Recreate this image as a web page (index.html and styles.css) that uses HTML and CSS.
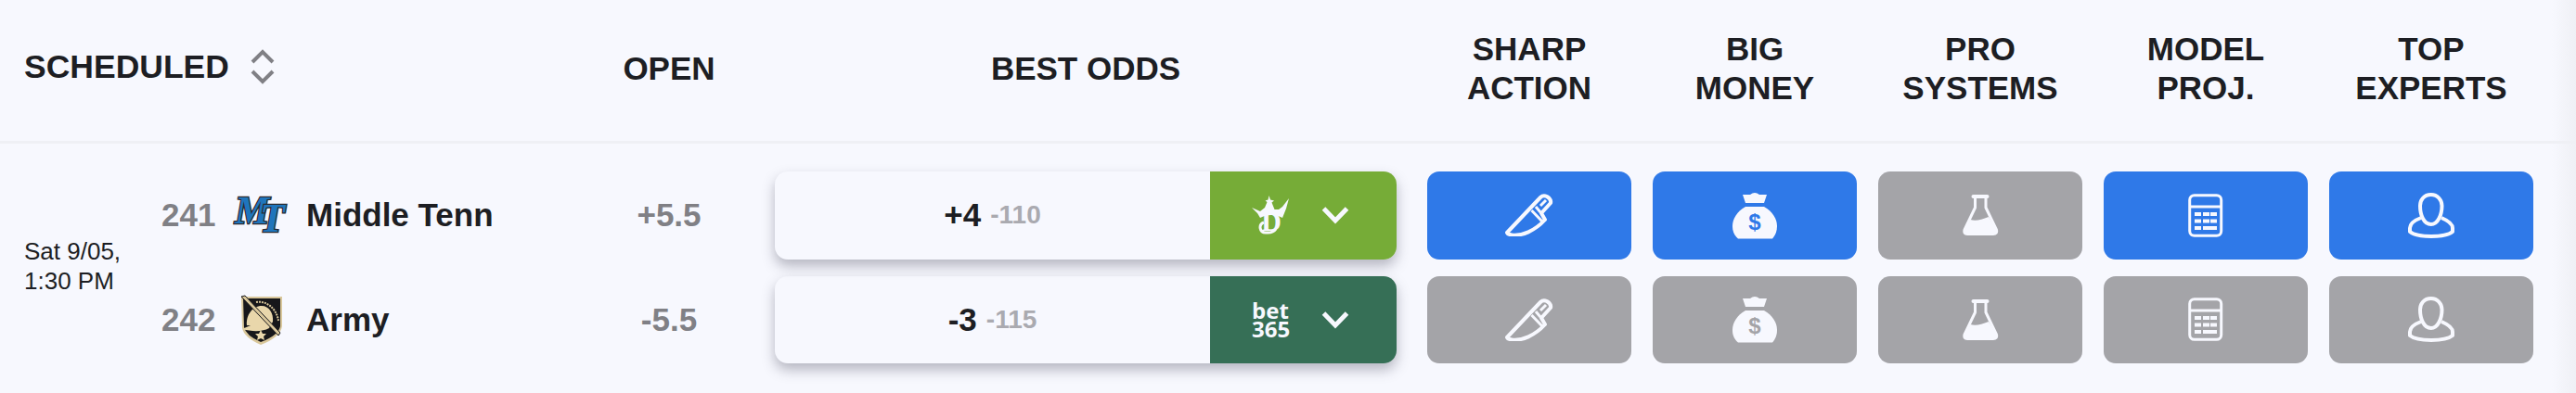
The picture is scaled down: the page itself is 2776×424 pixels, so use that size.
FILE: index.html
```html
<!DOCTYPE html>
<html>
<head>
  <meta charset="UTF-8" />
  <title>Scheduled Games</title>
  <link rel="stylesheet" href="styles.css">
</head>
<body>
  <svg class="defs" width="0" height="0">
    <symbol id="knife" viewBox="0 0 52 46">
      <path class="line" d="M2 42 L38 4 Q41 1 45 3 Q50 6 49 10 L39 21 L43 28 C32 40 18 46 7 44.5 Q3 44 2 42 Z" />
      <path class="line thin" d="M28.5 18 L40 30 M33 14 L38 20" />
      <path class="line thin" d="M38 13 L44 7" />
    </symbol>
    <symbol id="flask" viewBox="0 0 39 44">
      <rect class="solid" x="9.5" y="0" width="19" height="4" rx="2" />
      <path class="line thin" d="M13.5 3 V14 L2 38 Q1 42.5 5 42.5 H33 Q37.5 42.5 36.5 38 L25 14 V3" />
      <path class="solid" d="M8.5 27 C14 29 20 27 28 24 L37 39 Q37 43 33 43 H5 Q1 43 2 38 Z" />
    </symbol>
    <symbol id="calc" viewBox="0 0 38 47">
      <rect class="line thin" x="1.7" y="1.7" width="34" height="43.6" rx="5" />
      <path class="line thin" d="M2 14 H36" />
      <path class="solid" d="M7 20 h7 v4 h-7 z M16 20 h7 v4 h-7 z M24 20 h7 v4 h-7 z M7 27.5 h7 v4 h-7 z M16 27.5 h7 v4 h-7 z M24 27.5 h7 v4 h-7 z M7 35 h7 v4 h-7 z M16 35 h15 v4 h-15 z" />
    </symbol>
    <symbol id="person" viewBox="0 0 50 49">
      <path class="line" d="M24.8 2 C17 2 13 8 13 14 C13 24 17 34 24.8 34 C32 34 36.5 24 36.5 14 C36.5 8 32 2 24.8 2 Z" />
      <path class="line" d="M14 27 C6 30 2 33 2 38 V42 C10 48.5 40 48.5 48 42 V38 C48 33 43 30 36 27" />
    </symbol>
  </svg>

  <div class="board">
    <!-- Header -->
    <div class="head">
      <div class="head-sched">
        <span>SCHEDULED</span>
        <svg class="sort" width="26" height="38" viewBox="0 0 26 38">
          <path d="M2 14 L13 3 L24 14 M2 24 L13 35 L24 24" />
        </svg>
      </div>
      <div class="head-open">OPEN</div>
      <div class="head-odds">BEST ODDS</div>
      <div class="head-signals">
        <div>SHARP<br>ACTION</div>
        <div>BIG<br>MONEY</div>
        <div>PRO<br>SYSTEMS</div>
        <div>MODEL<br>PROJ.</div>
        <div>TOP<br>EXPERTS</div>
      </div>
    </div>

    <!-- Game -->
    <div class="game">
      <div class="game-date">Sat 9/05,<br>1:30 PM</div>
      <div class="lines">

        <div class="line-row">
          <div class="rot">241</div>
          <div class="logo">
            <svg width="60" height="40" viewBox="0 0 60 40">
              <text class="mt" x="3" y="29">M</text>
              <text class="mt mt-t" x="30" y="38">T</text>
            </svg>
          </div>
          <div class="team">Middle Tenn</div>
          <div class="open">+5.5</div>
          <div class="odds">
            <div class="odds-value"><b>+4</b><span>-110</span></div>
            <div class="book book-dk">
              <svg class="book-logo" width="40" height="42" viewBox="0 0 40 42">
                <text class="dk-d" x="21" y="38" text-anchor="middle">D</text>
                <path class="dk-crown" d="M0 13 L9 17 L14 13 L16.5 7 L14.5 5.5 L17.5 4.5 L18.5 0 L20 4.5 L24 5.5 L21.5 7.5 L24.5 15 L29 15 L33 12 L40 3 L37 14 L33 24 C26 20 16 20 9 24 L6 19 Z" />
                <path class="dk-swash" d="M13 29 C7 31 8 40 15 40 C20 40.5 24 39 26 36" />
              </svg>
              <svg class="chev" width="30" height="20" viewBox="0 0 30 20"><path d="M2.5 3 L15 16 L27.5 3" /></svg>
            </div>
          </div>
          <div class="signals">
            <div class="signal on"><svg width="52" height="46"><use href="#knife" /></svg></div>
            <div class="signal on">
              <svg width="48" height="51" viewBox="0 0 48 51">
                <path class="solid" d="M11 3 L19 3 Q24 -1 29 3 L37 3 L34 12 L14 12 Z" />
                <path class="solid" d="M14 16 H34 C43 21 48 29 48 37 C48 43 46 47 43 50.5 H6 C2 47 0 43 0 37 C0 29 5 21 14 16 Z" />
                <text class="cut" x="24" y="41" text-anchor="middle">$</text>
              </svg>
            </div>
            <div class="signal"><svg width="39" height="44"><use href="#flask" /></svg></div>
            <div class="signal on"><svg width="38" height="47"><use href="#calc" /></svg></div>
            <div class="signal on"><svg width="50" height="49"><use href="#person" /></svg></div>
          </div>
        </div>

        <div class="line-row">
          <div class="rot">242</div>
          <div class="logo">
            <svg class="logo-army" width="46" height="54" viewBox="0 0 46 54">
              <path d="M2 2 H46 V34 Q44 46 23 54 Q5 46 3 36 Z" fill="#d9c79b" />
              <path d="M4 4 H44 V34 Q42 44 23 51 Q7 44 5 35 Z" fill="#17171a" />
              <path d="M8 33 C7 22 14 12 24 12 C32 12 37 20 36 29 L32 36 C25 40 14 40 3 37 L12 33 Z" fill="#e9d7ab" />
              <path d="M2 2 L6 1 L44 41 L42 44 Z" fill="#d9c79b" stroke="#17171a" stroke-width="1" />
              <path d="M18 8 C28 6 40 14 42 28" fill="none" stroke="#d9c79b" stroke-width="2" stroke-dasharray="2 1" />
              <path d="M23 38 L25 42 L29 42 L26 45 L27 49 L23 47 L19 49 L20 45 L17 42 L21 42 Z" fill="#e9d7ab" />
            </svg>
          </div>
          <div class="team">Army</div>
          <div class="open">-5.5</div>
          <div class="odds">
            <div class="odds-value"><b>-3</b><span>-115</span></div>
            <div class="book book-365">
              <div class="book-logo bet365">bet<br>365</div>
              <svg class="chev" width="30" height="20" viewBox="0 0 30 20"><path d="M2.5 3 L15 16 L27.5 3" /></svg>
            </div>
          </div>
          <div class="signals">
            <div class="signal"><svg width="52" height="46"><use href="#knife" /></svg></div>
            <div class="signal">
              <svg width="48" height="51" viewBox="0 0 48 51">
                <path class="solid" d="M11 3 L19 3 Q24 -1 29 3 L37 3 L34 12 L14 12 Z" />
                <path class="solid" d="M14 16 H34 C43 21 48 29 48 37 C48 43 46 47 43 50.5 H6 C2 47 0 43 0 37 C0 29 5 21 14 16 Z" />
                <text class="cut" x="24" y="41" text-anchor="middle">$</text>
              </svg>
            </div>
            <div class="signal"><svg width="39" height="44"><use href="#flask" /></svg></div>
            <div class="signal"><svg width="38" height="47"><use href="#calc" /></svg></div>
            <div class="signal"><svg width="50" height="49"><use href="#person" /></svg></div>
          </div>
        </div>

      </div>
    </div>
  </div>
</body>
</html>
```

FILE: styles.css
```css
body {
  margin: 0;
  height: 424px;
  overflow: hidden;
  font-family: "Liberation Sans", Arial, sans-serif;
  color: #1d1e23;
  background: linear-gradient(to left, #eff0f5, #f7f8fe 26px);
}

.defs {
  position: absolute;
}

/* Header */
.head {
  display: flex;
  align-items: center;
  height: 148px;
  padding-bottom: 4px;
  border-bottom: 3px solid #eff0f5;
  font-size: 35px;
  font-weight: bold;
  line-height: 42px;
}

.head-sched {
  display: flex;
  align-items: center;
  gap: 23px;
  width: 594px;
  padding-left: 26px;
  margin-top: -4px;
  font-size: 35.5px;
}

.sort path {
  fill: none;
  stroke: #808085;
  stroke-width: 4;
}

.head-open {
  width: 202px;
  text-align: center;
}

.head-odds {
  width: 670px;
  margin-left: 13px;
  text-align: center;
}

.head-signals {
  display: flex;
  gap: 23px;
  margin-left: 33px;
  text-align: center;
}

.head-signals div {
  width: 220px;
}

/* Game */
.game {
  display: flex;
  padding-top: 30px;
}

.game-date {
  display: flex;
  align-items: center;
  width: 148px;
  padding-left: 26px;
  padding-bottom: 4px;
  box-sizing: border-box;
  font-size: 26px;
  line-height: 32px;
}

.lines {
  display: flex;
  flex-direction: column;
  gap: 18px;
}

.line-row {
  display: flex;
  align-items: center;
  height: 94.5px;
}

.rot {
  width: 76px;
  margin-left: 26px;
  font-size: 35px;
  font-weight: bold;
  color: #808085;
}

.logo {
  display: flex;
  justify-content: center;
  width: 60px;
  margin-right: 20px;
}

.logo svg {
  overflow: visible;
}

.logo-army {
  margin-left: 2px;
}

.team {
  width: 290px;
  font-size: 35px;
  font-weight: bold;
}

.open {
  width: 202px;
  font-size: 35px;
  font-weight: bold;
  text-align: center;
  color: #808085;
}

.mt {
  font-family: "Liberation Serif", serif;
  font-size: 42px;
  font-weight: bold;
  font-style: italic;
  fill: #1f75bc;
  stroke: #2b2b30;
  stroke-width: 2.5px;
  paint-order: stroke;
}

.mt-t {
  font-size: 44px;
}

/* Best odds */
.odds {
  display: flex;
  width: 670px;
  height: 94.5px;
  margin-left: 13px;
  border-radius: 14px;
  box-shadow: 0 7px 14px rgba(60, 60, 80, 0.35);
}

.odds-value {
  flex: 1;
  display: flex;
  align-items: center;
  justify-content: center;
  gap: 10px;
  font-size: 35px;
}

.odds-value span {
  font-size: 28px;
  font-weight: bold;
  color: #aaaab0;
}

.book {
  display: flex;
  align-items: center;
  width: 201px;
  padding-left: 45px;
  box-sizing: border-box;
  gap: 35px;
  border-radius: 0 14px 14px 0;
  color: #f7f8fe;
}

.book-dk {
  background-color: #76ac37;
}

.book-365 {
  background-color: #366f56;
}

.book-logo {
  flex: none;
  width: 40px;
}

.bet365 {
  font-family: "Open Sans", sans-serif;
  font-size: 24px;
  font-weight: bold;
  line-height: 20px;
  text-align: center;
}

.dk-d {
  font-family: "Liberation Serif", serif;
  font-size: 30px;
  font-weight: bold;
  fill: #f7f8fe;
}

.dk-crown {
  fill: #f7f8fe;
}

.dk-swash {
  fill: none;
  stroke: #f7f8fe;
  stroke-width: 3;
}

.chev path {
  fill: none;
  stroke: #f7f8fe;
  stroke-width: 5;
}

/* Signal buttons */
.signals {
  display: flex;
  gap: 23px;
  margin-left: 33px;
}

.signal {
  --btn: #a4a4a8;
  display: flex;
  align-items: center;
  justify-content: center;
  width: 220px;
  height: 94.5px;
  border-radius: 13px;
  background-color: var(--btn);
}

.signal.on {
  --btn: #2f79e8;
}

.line {
  fill: none;
  stroke: #f7f8fe;
  stroke-width: 4;
  stroke-linejoin: round;
}

.thin {
  stroke-width: 3;
}

.solid {
  fill: #f7f8fe;
}

.cut {
  font-family: "Liberation Sans", sans-serif;
  font-size: 24px;
  font-weight: bold;
  fill: var(--btn);
}
```
